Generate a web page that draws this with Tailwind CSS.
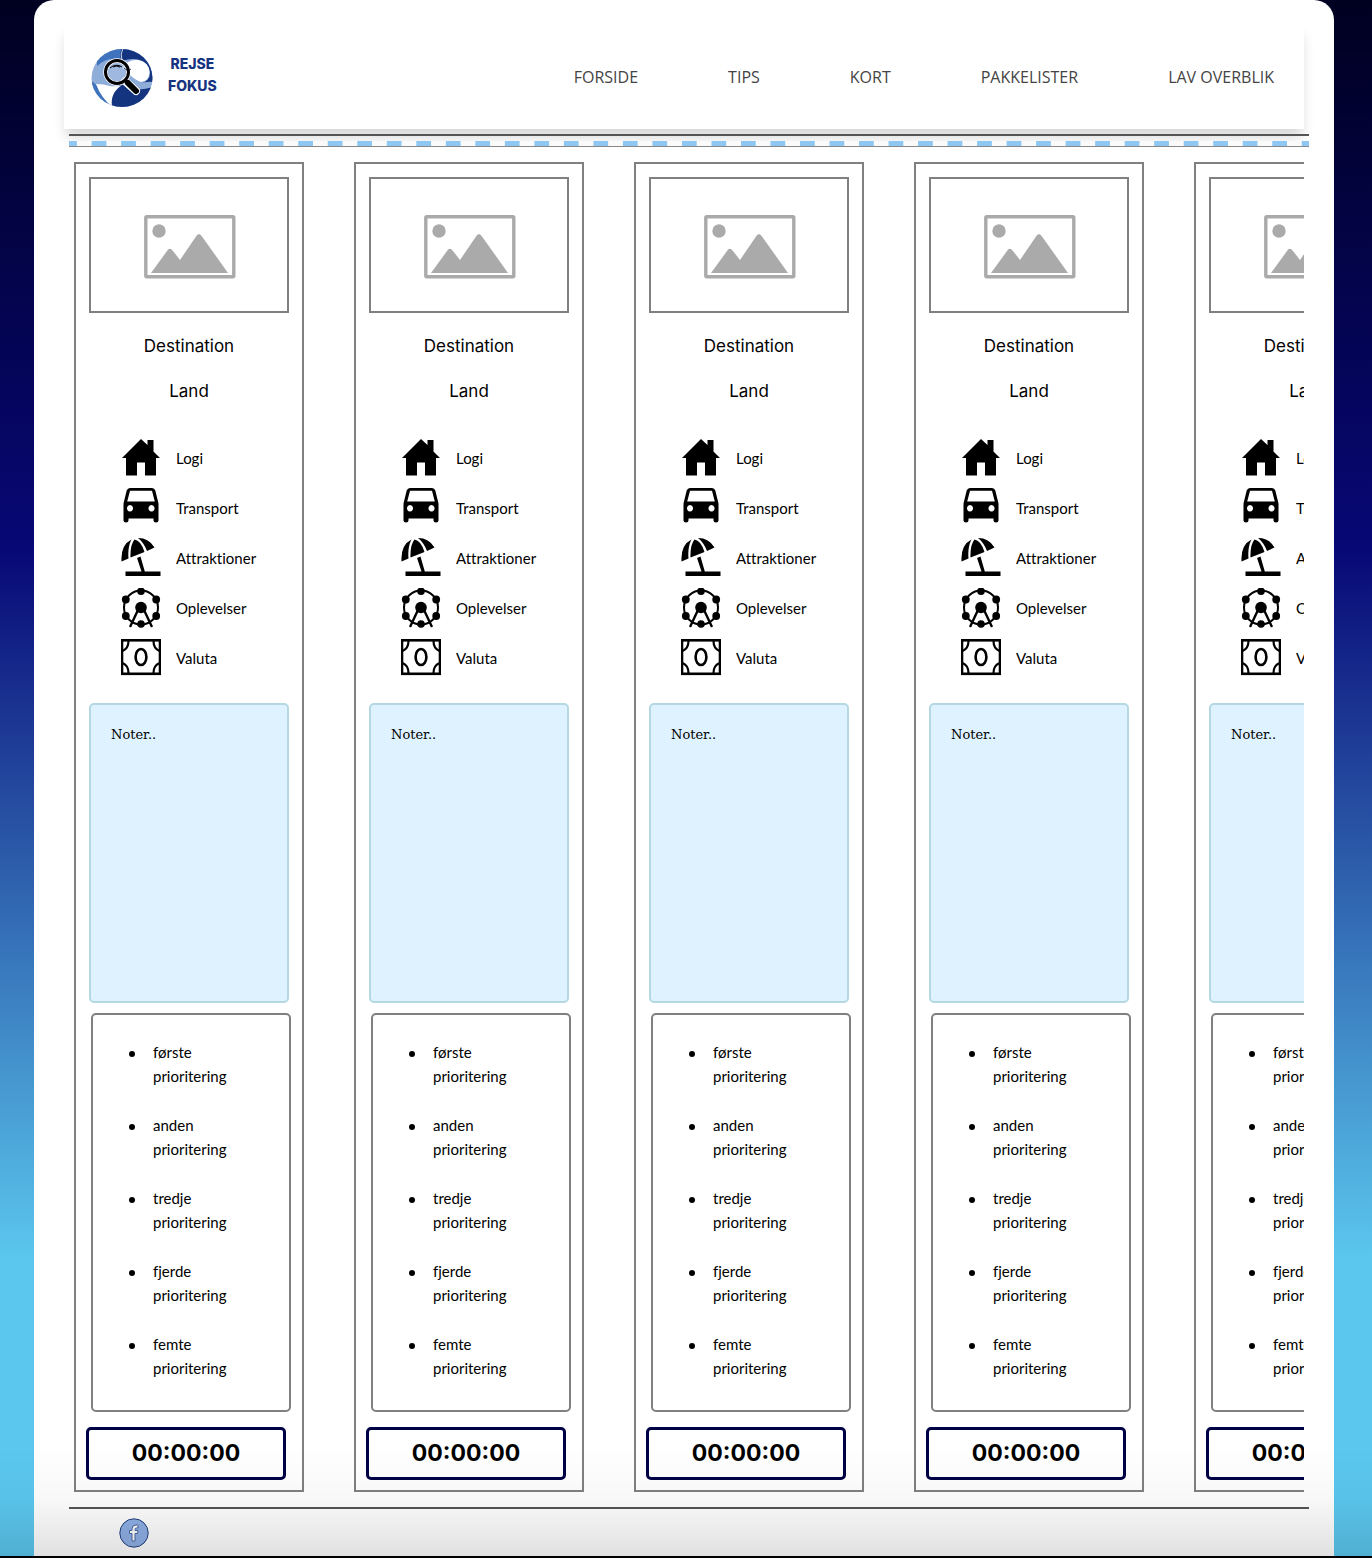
<!DOCTYPE html>
<html lang="da">
<head>
<meta charset="utf-8">
<meta name="viewport" content="width=device-width, initial-scale=1">
<title>Rejse Fokus – Lav overblik</title>
<script src="https://cdn.jsdelivr.net/npm/@tailwindcss/browser@4"></script>
</head>
<body class="bg-black">
<svg class="hidden" aria-hidden="true">
  <symbol id="billede" viewBox="0 0 92 64">
    <rect x="1.8" y="1.8" width="88" height="60" rx="1" fill="#fff" stroke="#aaa" stroke-width="3.4"/>
    <circle cx="15" cy="16" r="6.7" fill="#aaa"/>
    <path d="M7 58 23 36q2.500-4.500 6 0l7 9 16-23.500q3-5 6 0L84 58Z" fill="#aaa"/>
  </symbol>
  <symbol id="logi" viewBox="0 0 40 40">
    <path d="M20 1 26.500 7V2h6v11.500L39 20h-4v17.500H24V24.500h-8v13H5V20H1Z"/>
  </symbol>
  <symbol id="transport" viewBox="0 0 40 40">
    <path fill-rule="evenodd" d="M9 0h22q2.500 0 3.300 2.500L37.500 15.500v17q0 2-2.500 2t-2.500-2v-2h-25v2q0 2-2.500 2T2.500 32.500V15.500L5.700 2.500Q6.500 0 9 0ZM9 2.800 6.200 13.500h27.600L31 2.800ZM9 17a3 3.300 0 1 0 .01 0ZM30.500 17a3 3.300 0 1 0 .01 0Z"/>
  </symbol>
  <symbol id="attraktioner" viewBox="0 0 40 40">
    <path d="M.5 23.500Q-.5 7 10.500 1.500 6.500 9 7.500 20.500ZM9.500 19.500Q9 7 13.500 1.500q6.500 1 10 12.500ZM17 0Q28 0 33.500 9.500L26 13Q22.500 4 17 0Z"/>
    <path d="m16 20 3.500-1.400 4.300 15H39.500v4.500h-35v-4.500h16Z"/>
  </symbol>
  <symbol id="oplevelser" viewBox="0 0 40 40">
    <circle cx="20" cy="19.500" r="17" fill="none" stroke="#000" stroke-width="2"/>
    <path d="M17 22 9 39M23 22l8 17" fill="none" stroke="#000" stroke-width="2.400"/>
    <circle cx="20" cy="19.500" r="5.800"/>
    <circle cx="20" cy="3.300" r="3.800"/><circle cx="20" cy="36" r="3.800"/>
    <circle cx="4.800" cy="11.500" r="3.900"/><circle cx="35.200" cy="11.500" r="3.900"/>
    <circle cx="4.800" cy="28" r="3.900"/><circle cx="35.200" cy="28" r="3.900"/>
  </symbol>
  <symbol id="valuta" viewBox="0 0 40 40">
    <g fill="none" stroke="#000" stroke-width="2.600">
      <rect x="1" y="2.300" width="38" height="33.500"/>
      <ellipse cx="20" cy="19" rx="5.400" ry="8"/>
      <path d="M1.500 13Q7.500 10.500 7.500 3M38.500 13q-6-2.500-6-10M1.500 25q6 2.500 6 10M38.500 25q-6 2.500-6 10" stroke-width="2.200"/>
    </g>
  </symbol>
</svg>

<div class="relative border-b-2 border-black bg-[linear-gradient(180deg,#000020_0%,#070775_35%,#5bc7ee_81%,#5bc7ee_100%)] pr-[38px] pl-[34px]">
  <div class="rounded-t-[20px] bg-white px-[30px] pt-6">
    <header class="flex h-[105px] items-center justify-between pr-[30px] pl-[27px] shadow-[0_10px_12px_-2px_rgba(0,0,0,0.16)]">
      <a href="#" class="flex items-center gap-[15px]">
        <svg class="mt-[2px] h-[60px] w-[62px]" viewBox="0 0 62 60" aria-hidden="true">
          <clipPath id="globus"><ellipse cx="31" cy="30" rx="30.500" ry="29"/></clipPath>
          <g clip-path="url(#globus)">
            <rect width="62" height="60" fill="#8fadd9"/>
            <path d="M6 12Q18-2 34 0q-5 5-5 13Q18 7 6 18Z" fill="#3f73bd"/>
            <path d="M31 0Q54 0 62 20v14q-7-1-13 2 10-3 10-11Q57 11 42 11q-7 0-12 3-2-8 1-14Z" fill="#143480"/>
            <path d="M31 20q6-9 16-8 11 2 11.500 12 0 9-8.500 10-6-2-12-8-2-4-7-6Z" fill="#fff"/>
            <path d="M31 13Q29 6 32 0" fill="none" stroke="#fff" stroke-width=".8"/>
            <path d="M20 60Q16 38 33 36q10 9 29 3L50 60Z" fill="#143480"/>
            <path d="M0 33q5 2 9 10 4 9 12 17L0 60Z" fill="#3f73bd"/>
            <path d="M5 36q8 0 14 2 9 1 12-1-12 8-10 21Q10 50 5 36Z" fill="#fff"/>
          </g>
          <path d="m34 33 11 10" stroke="#fff" stroke-width="8" stroke-linecap="round"/>
          <circle cx="26" cy="24" r="11.500" fill="#a9c0e4" fill-opacity=".6" stroke="#fff" stroke-width="4.500"/>
          <path d="M33 20q4 4 7 1" fill="none" stroke="#27497f"/>
          <circle cx="26" cy="24" r="11.500" fill="none" stroke="#000" stroke-width="3"/>
          <path d="M19 20q6-5 12-1M22 19q3-2 7 0" fill="none" stroke="#000"/>
          <path d="m34 32 3 3" stroke="#000" stroke-width="3"/>
          <path d="m37 35 8 8" stroke="#000" stroke-width="6" stroke-linecap="round"/>
        </svg>
        <span class="pb-1 text-center font-['Inter',sans-serif] text-sm/[22px] font-extrabold text-[#16347f]">REJSE<br>FOKUS</span>
      </a>
      <nav class="flex gap-[90px] font-['Open_Sans',sans-serif] text-base font-normal text-[#444]">
        <a href="#">FORSIDE</a><a href="#">TIPS</a><a href="#">KORT</a><a href="#">PAKKELISTER</a><a href="#">LAV OVERBLIK</a>
      </nav>
    </header>

    <div class="relative -mr-[5px] ml-[5px] pt-[5px]">
      <hr class="border-t-2 border-[#555]">
      <div class="mt-[5px] h-[6px] border-b border-[#888] bg-[linear-gradient(90deg,#8ec8f2_25%,#fafafa_25%,#fafafa_75%,#8ec8f2_75%)] bg-[length:calc(100%/42)_100%]"></div>
    </div>

    <main id="destinationer" class="relative mt-[15px] flex gap-[50px] overflow-x-auto pl-[10px] [scrollbar-width:none]">
      <template>
        <article class="w-[230px] shrink-0 border-2 border-[#808080] pt-[13px] pb-[10px]">
          <div class="ml-[13px] flex h-[136px] w-[200px] items-center justify-center border-2 border-[#808080] pt-[3px] pl-[2px]">
            <svg class="h-[64px] w-[92px]" role="img" aria-label="Billede"><use href="#billede"/></svg>
          </div>
          <h2 class="mt-[21px] text-center font-['Inter',sans-serif] text-[17px]/6 font-normal">Destination</h2>
          <h3 class="mt-[21px] text-center font-['Inter',sans-serif] text-[17px]/6 font-normal">Land</h3>
          <ul class="mt-[30px] ml-[45px] font-['Lato',sans-serif] text-[15px] [font-variant-ligatures:none]">
            <li class="flex h-[50px] items-center gap-[15px]"><svg class="size-10" aria-hidden="true"><use href="#logi"/></svg>Logi</li>
            <li class="flex h-[50px] items-center gap-[15px]"><svg class="size-10" aria-hidden="true"><use href="#transport"/></svg>Transport</li>
            <li class="flex h-[50px] items-center gap-[15px]"><svg class="size-10" aria-hidden="true"><use href="#attraktioner"/></svg>Attraktioner</li>
            <li class="flex h-[50px] items-center gap-[15px]"><svg class="size-10" aria-hidden="true"><use href="#oplevelser"/></svg>Oplevelser</li>
            <li class="flex h-[50px] items-center gap-[15px]"><svg class="size-10" aria-hidden="true"><use href="#valuta"/></svg>Valuta</li>
          </ul>
          <textarea aria-label="Noter" class="mt-5 ml-[13px] block h-[300px] w-[200px] resize-none rounded-[5px] border-2 border-[#b4d8e2] bg-[#def3ff] p-5 font-['DejaVu_Serif',serif] text-[13px]/5">Noter..</textarea>
          <ul class="mt-[10px] ml-[15px] flex w-[200px] flex-col gap-[25px] rounded-[5px] border-2 border-[#808080] pt-[25px] pr-10 pb-[30px] pl-9 font-['Lato',sans-serif] text-[15px]/6 [font-variant-ligatures:none]">
            <li class="flex gap-[18px]"><span class="mt-[11px] size-[6px] shrink-0 rounded-full bg-black"></span><span>første prioritering</span></li>
            <li class="flex gap-[18px]"><span class="mt-[11px] size-[6px] shrink-0 rounded-full bg-black"></span><span>anden prioritering</span></li>
            <li class="flex gap-[18px]"><span class="mt-[11px] size-[6px] shrink-0 rounded-full bg-black"></span><span>tredje prioritering</span></li>
            <li class="flex gap-[18px]"><span class="mt-[11px] size-[6px] shrink-0 rounded-full bg-black"></span><span>fjerde prioritering</span></li>
            <li class="flex gap-[18px]"><span class="mt-[11px] size-[6px] shrink-0 rounded-full bg-black"></span><span>femte prioritering</span></li>
          </ul>
          <div class="mt-[15px] ml-[10px] flex h-[53px] w-[200px] items-center justify-center rounded-[5px] border-3 border-[#000045] font-['Inter',sans-serif] text-[23px] font-bold">00:00:00</div>
        </article>
      </template>
    </main>

    <footer class="mt-[15px] -mr-[5px] ml-[5px] h-[49px] border-t-2 border-[#555] pt-[9px] pl-[50px]">
      <a href="#" aria-label="Facebook" class="block size-[30px]">
        <svg class="size-[30px]" viewBox="0 0 30 30">
          <circle cx="15" cy="15" r="14.200" fill="#8fb0e6" stroke="#24407c"/>
          <path d="M13 23v-7.500h-2.500v-3H13V11q0-4 4-4h2v3h-1.500q-1.500 0-1.500 1.500v1h3l-.5 3H16V23Z" fill="#fff" stroke="#4a689f"/>
        </svg>
      </a>
    </footer>
  </div>
  <div class="pointer-events-none absolute inset-x-0 bottom-0 h-[110px] bg-linear-to-b from-black/0 via-black/3 to-black/12"></div>
</div>
<script>
  // One column per destination in the overview
  const list = document.getElementById('destinationer');
  const column = list.querySelector('template');
  for (let i = 0; i < 6; i++) list.append(column.content.cloneNode(true));
</script>
</body>
</html>
